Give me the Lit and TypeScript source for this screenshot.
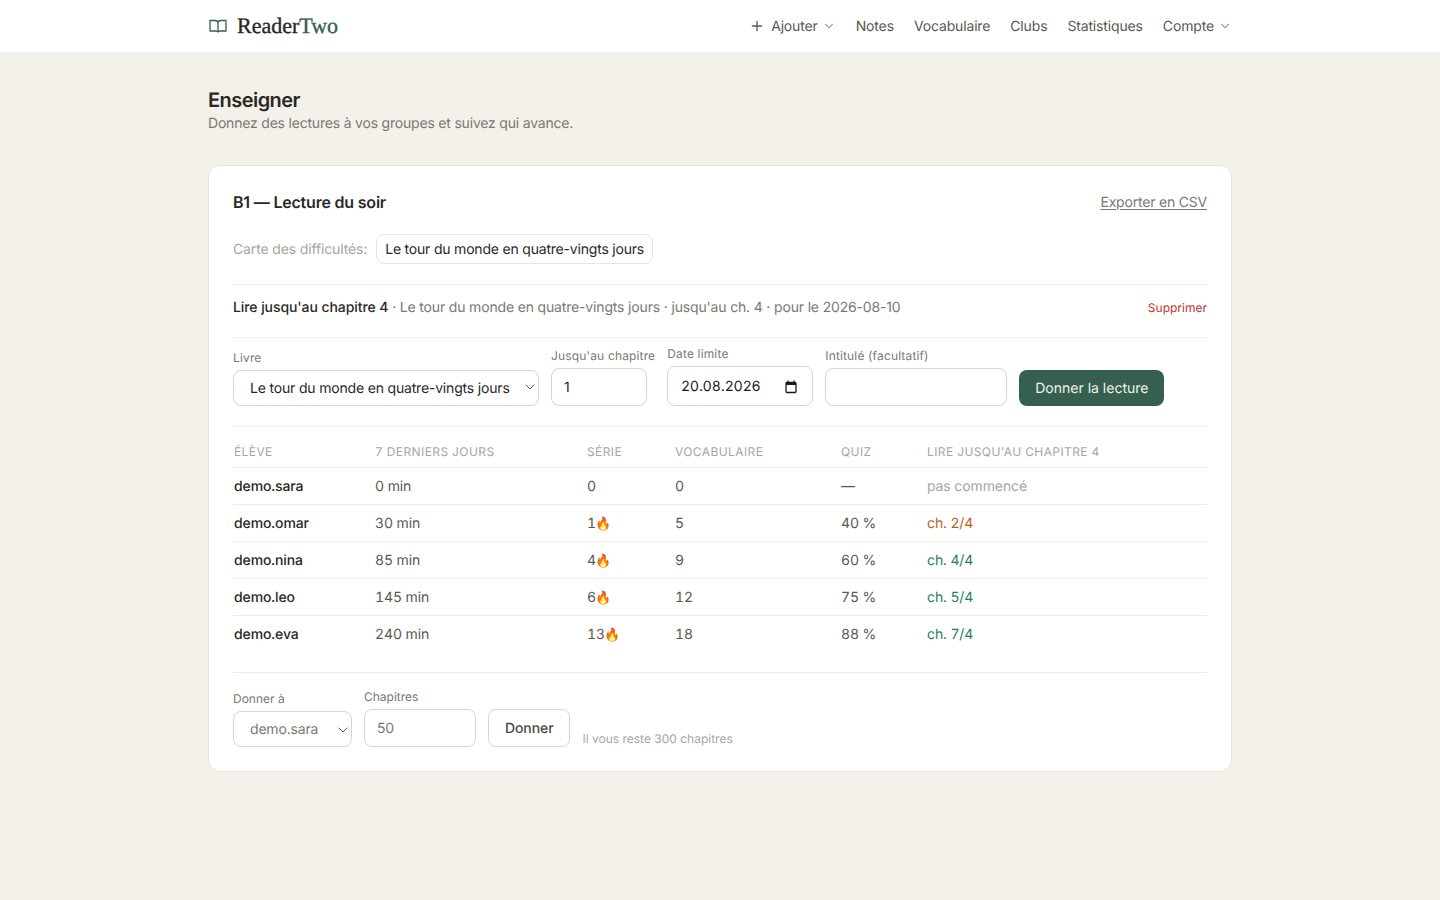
import { LitElement, html, css } from 'lit';
import { customElement } from 'lit/decorators.js';

interface Student {
  name: string;
  minutes: string;
  streak: number;
  flame: boolean;
  vocab: number;
  quiz: string;
  progress: string;
  tone: 'none' | 'late' | 'ok';
}

const STUDENTS: Student[] = [
  { name: 'demo.sara', minutes: '0 min', streak: 0, flame: false, vocab: 0, quiz: '—', progress: 'pas commencé', tone: 'none' },
  { name: 'demo.omar', minutes: '30 min', streak: 1, flame: true, vocab: 5, quiz: '40 %', progress: 'ch. 2/4', tone: 'late' },
  { name: 'demo.nina', minutes: '85 min', streak: 4, flame: true, vocab: 9, quiz: '60 %', progress: 'ch. 4/4', tone: 'ok' },
  { name: 'demo.leo', minutes: '145 min', streak: 6, flame: true, vocab: 12, quiz: '75 %', progress: 'ch. 5/4', tone: 'ok' },
  { name: 'demo.eva', minutes: '240 min', streak: 13, flame: true, vocab: 18, quiz: '88 %', progress: 'ch. 7/4', tone: 'ok' },
];

const BOOK = 'Le tour du monde en quatre-vingts jours';

@customElement('app-root')
export class AppRoot extends LitElement {
  static styles = css`
    :host {
      display: block;
      min-height: 900px;
      background: #f4f1ea;
      color: #2a2825;
      font-family: Inter, "Noto Sans", sans-serif;
      font-size: 14px;
      text-rendering: geometricPrecision;
    }

    * { box-sizing: border-box; }

    .topbar {
      height: 52px;
      background: #fff;
    }

    .topbar-inner, .page {
      width: 1024px;
      margin: 0 auto;
    }

    .topbar-inner {
      height: 100%;
      display: flex;
      align-items: center;
      justify-content: space-between;
    }

    .brand {
      display: flex;
      align-items: center;
      gap: 10px;
      font-family: "Liberation Serif", serif;
      font-size: 22px;
      font-weight: 400;
      -webkit-text-stroke: 0.35px currentColor;
      color: #2a2825;
    }

    .brand svg { color: #35604f; margin-left: 1px; }
    .brand span { color: #35604f; }

    nav {
      display: flex;
      align-items: center;
      gap: 20px;
      color: #5b5852;
      letter-spacing: -0.15px;
    }

    .nav-item {
      display: flex;
      align-items: center;
      gap: 6px;
    }

    .nav-item .chev { color: #a8a59e; margin-left: -2px; }
    .nav-item .plus { color: #5b5852; }

    .page { padding-top: 37px; }

    h1 {
      margin: 0;
      font-size: 20px;
      line-height: 22px;
      font-weight: 600;
      letter-spacing: -0.55px;
    }

    .sub {
      margin: 3px 0 0;
      line-height: 20px;
      color: #7b7872;
      letter-spacing: -0.2px;
    }

    .card {
      margin-top: 31px;
      padding: 24px;
      background: #fff;
      border: 1px solid #e8e5de;
      border-radius: 12px;
    }

    .card-head {
      display: flex;
      justify-content: space-between;
      align-items: center;
      height: 24px;
    }

    h2 {
      margin: 0;
      font-size: 16px;
      font-weight: 600;
      letter-spacing: -0.2px;
    }

    .export {
      color: #7b7872;
      letter-spacing: -0.2px;
      text-decoration: underline;
      text-underline-offset: 2px;
    }

    .heat {
      display: flex;
      align-items: center;
      gap: 9px;
      margin-top: 20px;
      color: #a8a59e;
      letter-spacing: -0.14px;
    }

    .chip {
      height: 30px;
      padding: 0 8px;
      display: flex;
      align-items: center;
      color: #2a2825;
      letter-spacing: -0.2px;
      border: 1px solid #e8e5de;
      border-radius: 8px;
    }

    .assignment {
      display: flex;
      justify-content: space-between;
      align-items: flex-start;
      height: 54px;
      margin-top: 20px;
      padding-top: 13px;
      border-top: 1px solid #f0ede7;
      border-bottom: 1px solid #f0ede7;
      line-height: 20px;
      color: #7b7872;
      letter-spacing: -0.165px;
    }

    .assignment b { font-weight: 500; color: #2a2825; letter-spacing: -0.08px; }

    .remove {
      font-size: 12px;
      line-height: 20px;
      letter-spacing: 0;
      color: #c0322b;
    }

    .form {
      display: flex;
      align-items: flex-end;
      gap: 12px;
    }

    .assign-form {
      height: 89px;
      padding-bottom: 20px;
      border-bottom: 1px solid #f0ede7;
    }

    label {
      display: flex;
      flex-direction: column;
      gap: 4px;
      font-size: 12px;
      line-height: 16px;
      color: #7b7872;
    }

    .assign-form label { letter-spacing: 0.15px; }

    input, select, button {
      text-rendering: geometricPrecision;
    }

    input, select {
      font: inherit;
      font-size: 14px;
      color: #2a2825;
      letter-spacing: -0.18px;
      background: #fff;
      border: 1px solid #d9d6cf;
      border-radius: 8px;
      padding: 8px 12px;
      outline: none;
    }

    .select-wrap {
      position: relative;
      display: block;
    }

    .select-wrap svg {
      position: absolute;
      right: 4px;
      top: 12px;
      color: #5b5852;
      pointer-events: none;
    }

    .give .select-wrap svg { top: 14px; }

    select {
      display: block;
      height: 36px;
      padding: 1px 16px 0;
      appearance: none;
    }

    input { height: 38px; }

    input.w-date {
      display: block;
      height: 40px;
      padding: 8px 13px;
      color: #1a1917;
      letter-spacing: 0.3px;
    }

    .select-wrap svg.cal {
      right: 16px;
      top: 14px;
      color: #1a1917;
    }

    .w-book { width: 306px; }
    .w-chapter { width: 96px; }
    .w-date { width: 146px; }
    .w-title { width: 182px; }
    .w-student { width: 119px; color: #7b7872; }
    .w-amount { width: 112px; color: #7b7872; }

    .primary, .secondary {
      font: inherit;
      font-size: 14px;
      border-radius: 8px;
      padding: 0 16px;
    }

    .primary {
      height: 36px;
      color: #f4f1ea;
      background: #35604f;
      border: 0;
    }

    .secondary {
      height: 38px;
      font-weight: 500;
      letter-spacing: -0.1px;
      color: #4a4843;
      background: #fff;
      border: 1px solid #d9d6cf;
    }

    .table {
      margin-top: 6px;
      border-bottom: 1px solid #f0ede7;
      padding-bottom: 19px;
    }

    .row {
      display: grid;
      grid-template-columns: 141px 212px 88px 166px 86px 1fr;
      align-items: center;
      height: 37px;
      padding-left: 1px;
      border-bottom: 1px solid #f0ede7;
      color: #5b5852;
      letter-spacing: -0.1px;
      font-variant-numeric: tabular-nums;
    }

    .row:last-child { border-bottom: 0; }

    .row.head {
      height: 35px;
      padding-top: 2px;
      font-size: 12px;
      letter-spacing: 0.4px;
      color: #a8a59e;
      text-transform: uppercase;
    }

    .name { font-weight: 500; color: #2a2825; }
    .none { color: #a8a59e; }
    .late { color: #b3651f; }
    .ok { color: #2b7d5f; }
    .flame { font-size: 13px; margin-left: -1px; }

    .give {
      margin-top: 16px;
    }

    .hint {
      font-size: 12px;
      line-height: 16px;
      color: #a8a59e;
    }
  `;

  private chevron() {
    return html`<svg class="chev" width="14" height="14" viewBox="0 0 24 24" fill="none" stroke="currentColor" stroke-width="2" stroke-linecap="round" stroke-linejoin="round"><path d="m6 9 6 6 6-6"/></svg>`;
  }

  private selectArrow() {
    return html`<svg width="10" height="10" viewBox="0 0 10 10" fill="none" stroke="currentColor" stroke-width="1" stroke-linecap="round" stroke-linejoin="round"><path d="m1 3 4 4 4-4"/></svg>`;
  }

  render() {
    return html`
      <header class="topbar">
        <div class="topbar-inner">
          <div class="brand">
            <svg width="18" height="14" viewBox="0 0 18 14" fill="none" stroke="currentColor" stroke-width="1.3" stroke-linejoin="round">
              <path d="M1 1.5h5c1.7 0 3 .9 3 2.2 0-1.3 1.3-2.2 3-2.2h5V12h-6c-1 0-2 .4-2 1 0-.6-1-1-2-1H1z"/>
              <path d="M9 3.7V13"/>
            </svg>
            <div>Reader<span>Two</span></div>
          </div>
          <nav>
            <div class="nav-item">
              <svg class="plus" width="16" height="16" viewBox="0 0 24 24" fill="none" stroke="currentColor" stroke-width="2" stroke-linecap="round"><path d="M5 12h14M12 5v14"/></svg>
              Ajouter ${this.chevron()}
            </div>
            <div class="nav-item">Notes</div>
            <div class="nav-item">Vocabulaire</div>
            <div class="nav-item">Clubs</div>
            <div class="nav-item">Statistiques</div>
            <div class="nav-item">Compte ${this.chevron()}</div>
          </nav>
        </div>
      </header>

      <main class="page">
        <h1>Enseigner</h1>
        <p class="sub">Donnez des lectures à vos groupes et suivez qui avance.</p>

        <section class="card">
          <div class="card-head">
            <h2>B1 — Lecture du soir</h2>
            <span class="export">Exporter en CSV</span>
          </div>

          <div class="heat">
            <span>Carte des difficultés:</span>
            <span class="chip">${BOOK}</span>
          </div>

          <div class="assignment">
            <div><b>Lire jusqu'au chapitre 4</b> · ${BOOK} · jusqu'au ch. 4 · pour le 2026-08-10</div>
            <span class="remove">Supprimer</span>
          </div>

          <div class="form assign-form">
            <label>Livre
              <span class="select-wrap">
                <select class="w-book"><option>${BOOK}</option></select>
                ${this.selectArrow()}
              </span>
            </label>
            <label>Jusqu'au chapitre
              <input class="w-chapter" type="number" value="1" />
            </label>
            <label>Date limite
              <span class="select-wrap">
                <input class="w-date" type="text" value="20.08.2026" />
                <svg class="cal" width="12" height="14" viewBox="0 0 12 14" fill="none" stroke="currentColor">
                  <rect x="1" y="2.5" width="10" height="10" rx="1" stroke-width="1.3"/>
                  <rect x="1" y="2.5" width="10" height="2.5" fill="currentColor" stroke="none"/>
                  <path d="M3 .5v2M9 .5v2" stroke-width="1.3"/>
                </svg>
              </span>
            </label>
            <label>Intitulé (facultatif)
              <input class="w-title" type="text" />
            </label>
            <button class="primary">Donner la lecture</button>
          </div>

          <div class="table">
            <div class="row head">
              <span>Élève</span><span>7 derniers jours</span><span>Série</span>
              <span>Vocabulaire</span><span>Quiz</span><span>Lire jusqu'au chapitre 4</span>
            </div>
            ${STUDENTS.map(s => html`
              <div class="row">
                <span class="name">${s.name}</span>
                <span>${s.minutes}</span>
                <span>${s.streak}${s.flame ? html`<span class="flame">🔥</span>` : ''}</span>
                <span>${s.vocab}</span>
                <span>${s.quiz}</span>
                <span class="${s.tone}">${s.progress}</span>
              </div>
            `)}
          </div>

          <div class="form give">
            <label>Donner à
              <span class="select-wrap">
                <select class="w-student"><option>demo.sara</option></select>
                ${this.selectArrow()}
              </span>
            </label>
            <label>Chapitres
              <input class="w-amount" type="number" value="50" />
            </label>
            <button class="secondary">Donner</button>
            <span class="hint">Il vous reste 300 chapitres</span>
          </div>
        </section>
      </main>
    `;
  }
}
